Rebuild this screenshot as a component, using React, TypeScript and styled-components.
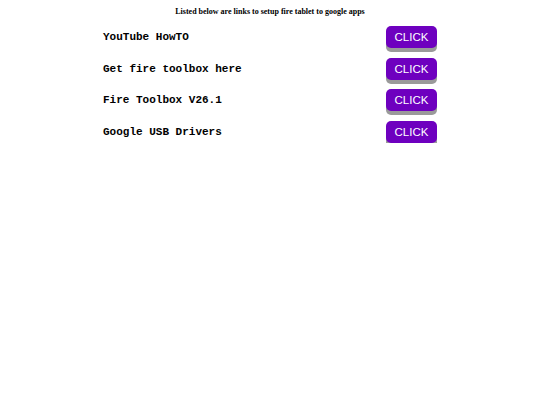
import React from "react";
import styled, { createGlobalStyle } from "styled-components";

const Global = createGlobalStyle`
  html, body { margin: 0; padding: 0; background: #fff; }
`;

const Page = styled.div`
  padding-top: 7px;
`;

const Title = styled.h1`
  margin: 0 0 9px;
  text-align: center;
  font-family: "Liberation Serif", serif;
  font-weight: bold;
  font-size: 8px;
  line-height: 10px;
  color: #000;
`;

const List = styled.div`
  width: 334px;
  margin: 0 auto;
  display: flex;
  flex-direction: column;
  gap: 9.7px;
`;

const Row = styled.div`
  display: flex;
  align-items: center;
  justify-content: space-between;
  height: 22px;
`;

const Label = styled.span`
  font-family: "Liberation Mono", monospace;
  font-weight: bold;
  font-size: 11px;
  color: #000;
`;

const Button = styled.button`
  width: 51px;
  height: 22px;
  border: none;
  border-radius: 5px;
  background: #6e00bf;
  color: #fff;
  font-family: "Liberation Sans", Arial, sans-serif;
  font-size: 11.5px;
  padding: 0;
  box-shadow: 0 4px 0 #9a9a9a;
  cursor: pointer;
`;

const items = ["YouTube HowTO", "Get fire toolbox here", "Fire Toolbox V26.1", "Google USB Drivers"];

export default function App() {
  return (
    <Page>
      <Global />
      <Title>Listed below are links to setup fire tablet to google apps</Title>
      <List>
        {items.map((t) => (
          <Row key={t}>
            <Label>{t}</Label>
            <Button>CLICK</Button>
          </Row>
        ))}
      </List>
    </Page>
  );
}
